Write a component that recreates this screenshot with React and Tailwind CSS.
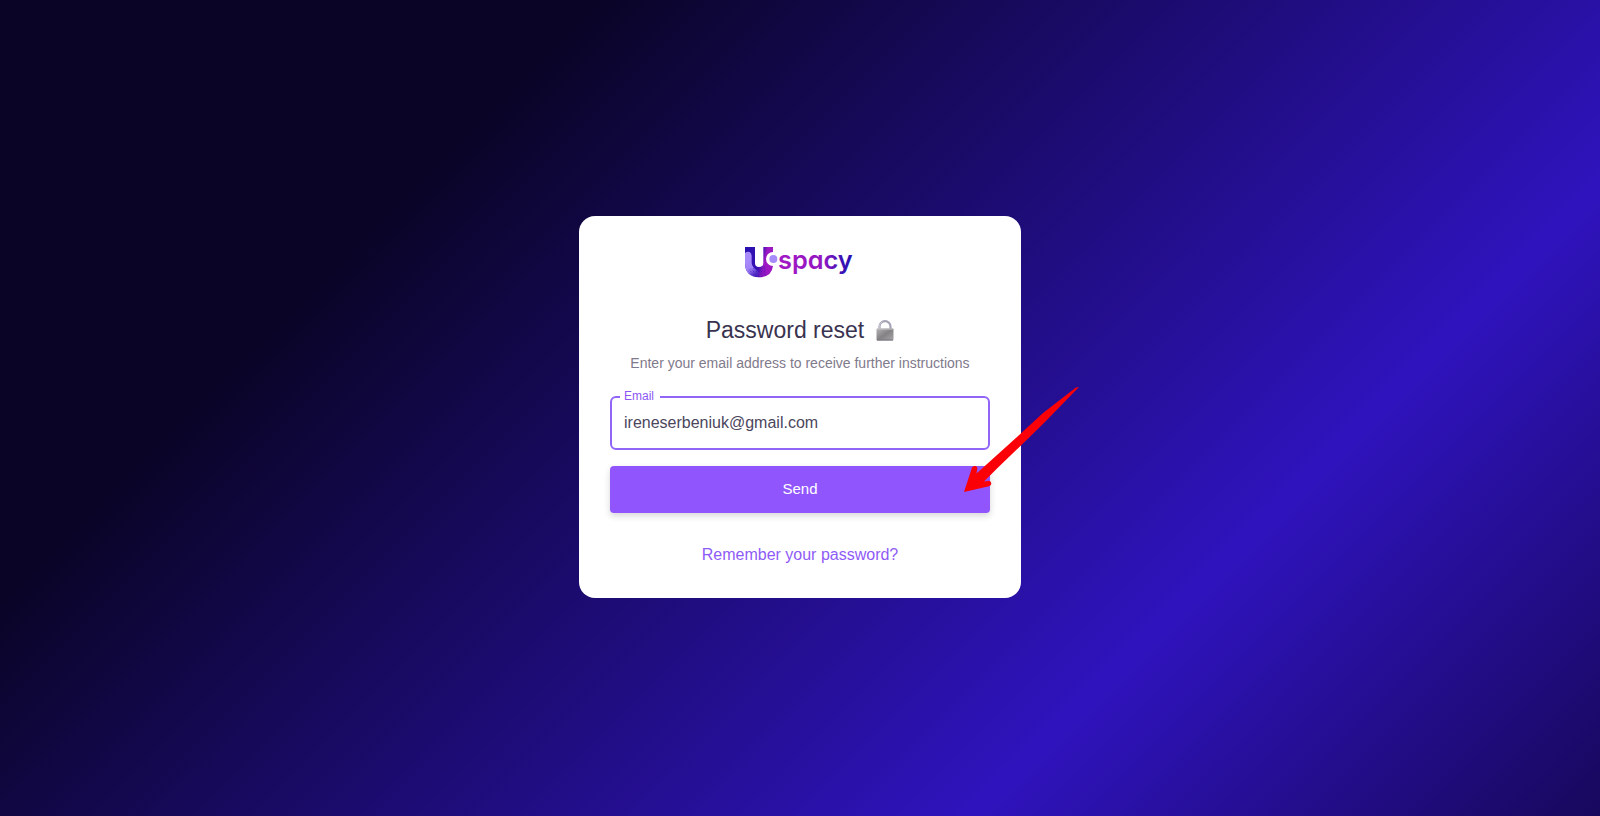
function Logo() {
  return (
    <svg viewBox="0 -12 333 108" className="h-9 w-[111px]" role="img" aria-label="Uspacy">
      <defs>
        <linearGradient id="stem" gradientUnits="userSpaceOnUse" x1="0" y1="40" x2="84" y2="60">
          <stop offset="0" stopColor="#2a0fb0" />
          <stop offset="0.5" stopColor="#3a10b4" />
          <stop offset="0.68" stopColor="#9d18c2" />
          <stop offset="1" stopColor="#9d18c2" />
        </linearGradient>
        <linearGradient id="wave" gradientUnits="userSpaceOnUse" x1="6" y1="40" x2="50" y2="92">
          <stop offset="0" stopColor="#a78bfa" />
          <stop offset="0.45" stopColor="#a07ff8" />
          <stop offset="1" stopColor="#4216b8" stopOpacity="0" />
        </linearGradient>
        <linearGradient id="word" gradientUnits="userSpaceOnUse" x1="100" y1="0" x2="324" y2="0">
          <stop offset="0" stopColor="#a219c4" />
          <stop offset="0.6" stopColor="#9317c2" />
          <stop offset="0.85" stopColor="#3c12b6" />
          <stop offset="1" stopColor="#2a0fb0" />
        </linearGradient>
        <pattern id="dots" width="8" height="8" patternUnits="userSpaceOnUse">
          <rect width="3" height="3" fill="#2a0fb0" />
          <rect x="4" y="4" width="3" height="3" fill="#2a0fb0" />
        </pattern>
      </defs>
      <path d="M0 0H30V48Q30 60 42 60Q55 60 55 48V0H84V15A21 21 0 0 0 84 57Q80 90 42 91Q0 89 0 48Z" fill="url(#stem)" />
      <path d="M0 18Q6 12 14 15Q20 18 20 28V48Q22 62 34 68L52 90Q44 92 38 91Q0 87 0 48Z" fill="url(#wave)" />
      <path d="M10 66Q34 60 62 56L64 84Q54 91 42 91Q22 90 10 76Z" fill="url(#dots)" opacity="0.7" />
      <circle cx="85" cy="36" r="12" fill="#a78bfa" />
      <text
        x="99"
        y="66"
        fontSize="76"
        fontWeight="600"
        fill="url(#word)"
        className="font-['Inter',sans-serif] [font-feature-settings:'cv11']"
      >
        spacy
      </text>
    </svg>
  );
}

function LockIcon() {
  return (
    <svg viewBox="0 0 18 21" className="h-[21px] w-[18px]" aria-hidden="true">
      <defs>
        <linearGradient id="body" x1="0" y1="0" x2="1" y2="1">
          <stop offset="0" stopColor="#b5b3b5" />
          <stop offset="0.5" stopColor="#858285" />
          <stop offset="1" stopColor="#a9a6a9" />
        </linearGradient>
      </defs>
      <path d="M3.500 11V6.500a5.500 5.300 0 0 1 11 0V11" fill="none" stroke="#a5a2b4" strokeWidth="2.200" />
      <path d="M3.300 9V6.300a5.200 5.200 0 0 1 3-4.600" fill="none" stroke="#d5d2de" strokeWidth="0.800" />
      <rect x="0.500" y="8.500" width="17" height="12" rx="1" fill="url(#body)" />
      <path d="M1 9H17" stroke="#c9c7c9" strokeWidth="1" />
      <path d="M1 20H17" stroke="#77747a" strokeWidth="1" />
    </svg>
  );
}

function PointerArrow() {
  return (
    <svg
      viewBox="963 386 118 108"
      className="pointer-events-none absolute top-[170px] left-[384px] h-[108px] w-[118px]"
      aria-hidden="true"
    >
      <path
        d="M964 492L972 467.500Q973 465.500 975.500 466Q977.500 466.500 977.300 468.500L976.500 473.500L1017 437L1043 413L1076 387.500L1079 387L1045 422L1022 444.500L997 468.500L984 481.500L989 480.800Q991.500 481.500 991.300 484Q990.500 486 989 486.200Z"
        fill="#fb0007"
      />
    </svg>
  );
}

export default function App() {
  return (
    <main className="flex min-h-screen items-center justify-center bg-[linear-gradient(135deg,#0a0427_25%,#2f13bd_74%,#18085c_100%)] font-['Liberation_Sans',Arial,sans-serif]">
      <section className="relative mb-0.5 flex w-[442px] flex-col rounded-2xl bg-white px-[31px] pt-[27px] pb-[31px]">
        <div className="flex justify-center">
          <Logo />
        </div>
        <h1 className="mt-[35px] flex items-center justify-center gap-3 text-[23px] leading-8 text-[#39334f]">
          Password reset
          <LockIcon />
        </h1>
        <p className="mt-[7px] text-center text-sm leading-5 text-[#7f7a8c]">
          Enter your email address to receive further instructions
        </p>
        <form className="mt-[23px] flex flex-col gap-4" onSubmit={(e) => e.preventDefault()}>
          <div className="relative">
            <label htmlFor="email" className="absolute -top-2 left-2.5 bg-white pr-1.5 pl-1 text-xs leading-4 text-[#8c57f5]">
              Email
            </label>
            <input
              id="email"
              type="email"
              defaultValue="ireneserbeniuk@gmail.com"
              className="h-[54px] w-full rounded-md border-2 border-[#9065f7] px-3 text-base text-[#4b465c] outline-none"
            />
          </div>
          <button
            type="submit"
            className="h-[47px] rounded bg-[#9155fd] text-[15px] text-white shadow-[0_3px_6px_rgba(58,53,65,0.2)]"
          >
            Send
          </button>
        </form>
        <a href="#login" className="mt-[30px] self-center text-base leading-6 text-[#8f5bf6]">
          Remember your password?
        </a>
        <PointerArrow />
      </section>
    </main>
  );
}
